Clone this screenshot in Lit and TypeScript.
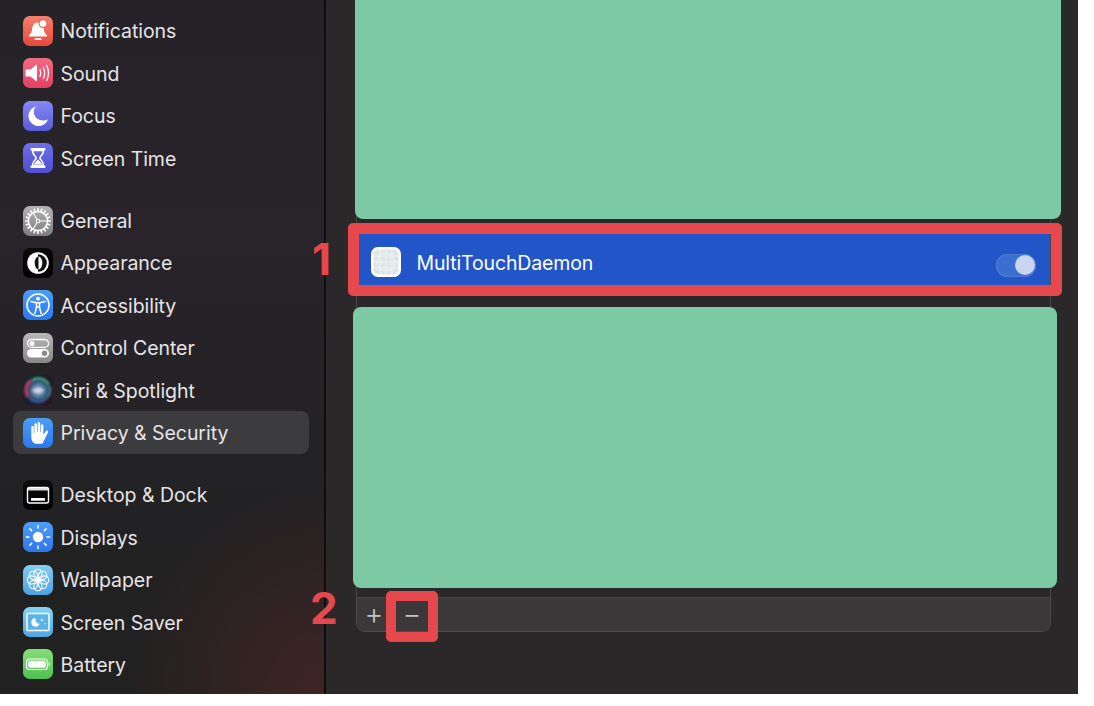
import { LitElement, html, css, svg } from "lit";
import { customElement } from "lit/decorators.js";

const tile = (id: string, from: string, to: string, body: unknown) => html`<svg class="ico" viewBox="0 0 30 30" width="30" height="30">
  <defs><linearGradient id=${id} x1="0" y1="0" x2="0" y2="1"><stop offset="0" stop-color=${from}></stop><stop offset="1" stop-color=${to}></stop></linearGradient></defs>
  <rect x="0" y="0" width="30" height="30" rx="6.8" fill=${`url(#${id})`}></rect>${body}</svg>`;

const rays = (cx: number, cy: number, r1: number, r2: number, n: number, w: number) =>
  Array.from({ length: n }, (_, i) => {
    const a = (i * 2 * Math.PI) / n;
    return svg`<line x1=${cx + r1 * Math.cos(a)} y1=${cy + r1 * Math.sin(a)} x2=${cx + r2 * Math.cos(a)} y2=${cy + r2 * Math.sin(a)} stroke="#fff" stroke-width=${w} stroke-linecap="round"></line>`;
  });

const petals = Array.from({ length: 8 }, (_, i) => {
  const a = (i * Math.PI) / 4;
  return svg`<circle cx=${15 + 6.6 * Math.cos(a)} cy=${15 + 6.6 * Math.sin(a)} r="4.1" fill="none" stroke="#fff" stroke-width="1.1"></circle>`;
});

const groups = [
  [
    ["Notifications", tile("g1", "#f5806f", "#e5493a", svg`
      <path d="M15 6.500c-3.800 0-5.600 3-5.800 6.200-.2 3-1.200 5-3.200 6.600-.5.500-.2 1.200.5 1.200h17c.7 0 1-.7.5-1.200-2-1.600-3-3.600-3.200-6.600C20.600 9.500 18.800 6.500 15 6.500z" fill="#fff"></path>
      <rect x="11.500" y="22.300" width="7" height="1.800" rx=".9" fill="#fff"></rect>
      <circle cx="20" cy="7.500" r="4.600" fill="#ee6a5a"></circle><circle cx="20" cy="7.500" r="3.300" fill="#fff"></circle>`)],
    ["Sound", tile("g2", "#f26a84", "#e53f60", svg`
      <path d="M3.500 11.500h4l5.500-4.500c.5-.3 1-.1 1 .5v15c0 .6-.5.8-1 .5l-5.500-4.500h-4c-.6 0-1-.4-1-1v-5c0-.6.400-1 1-1z" fill="#fff"></path>
      <path d="M17 11.500c1 2.200 1 4.800 0 7M20.300 9.500c1.700 3.400 1.700 7.600 0 11M23.600 7.500c2.400 4.700 2.400 10.300 0 15" fill="none" stroke="#fff" stroke-width="1.300" stroke-linecap="round"></path>`)],
    ["Focus", tile("g3", "#8488f4", "#5a5cd9", svg`
      <path d="M13.500 5.500C8.800 6.300 5.500 10.400 5.500 15c0 5.500 4.500 10 10 10 4.400 0 8-2.700 9.400-6.500-1.500.8-3.100 1.100-4.700 1.100-5.500 0-9.400-4-9.400-9 0-1.800.9-3.800 2.700-5.100z" fill="#fff"></path>`)],
    ["Screen Time", tile("g4", "#6c6eea", "#4f50d0", svg`
      <rect x="7.500" y="5" width="15" height="2.400" rx="1" fill="#fff"></rect><rect x="7.500" y="22.600" width="15" height="2.400" rx="1" fill="#fff"></rect>
      <path d="M9.500 7.500h11c0 4.500-3.700 5.700-3.700 7.500s3.700 3 3.700 7.500h-11c0-4.500 3.700-5.700 3.700-7.500s-3.700-3-3.700-7.500z" fill="none" stroke="#fff" stroke-width="1.600"></path>
      <path d="M11 21.500c.5-2.500 3-3.500 4-5 1 1.500 3.500 2.500 4 5z" fill="#fff"></path>`)],
  ],
  [
    ["General", tile("g5", "#b4b4b4", "#7d7d7d", svg`
      ${rays(15, 15, 10.2, 12.2, 20, 1.7)}
      <circle cx="15" cy="15" r="9.600" fill="none" stroke="#fff" stroke-width="1.500"></circle>
      <circle cx="15" cy="15" r="1.700" fill="none" stroke="#fff" stroke-width="1.100"></circle>
      <path d="M16.700 15h8M14.100 13.500 10 6.700M14.100 16.500 10 23.300" stroke="#fff" stroke-width="1.100" fill="none"></path>`)],
    ["Appearance", tile("g6", "#0a0a0a", "#000000", svg`
      <circle cx="15" cy="15" r="10.800" fill="#fff"></circle>
      <path d="M15 6.200a8.800 8.800 0 0 1 0 17.600z" fill="#111"></path>
      <ellipse cx="15.500" cy="15" rx="3.800" ry="6.400" fill="#fff"></ellipse>
      <path d="M15.500 8.600a3.800 6.400 0 0 0 0 12.800z" fill="#111"></path>`)],
    ["Accessibility", tile("g7", "#4b9ff9", "#2a78ec", svg`
      <circle cx="15" cy="15" r="11" fill="none" stroke="#fff" stroke-width="1.500"></circle>
      <circle cx="15" cy="8.700" r="1.900" fill="#fff"></circle>
      <path d="M7.800 11.500 13.300 12.700h3.400L22.200 11.500M13.500 12.800v4.200l-1.600 6.600M16.500 12.800v4.200l1.600 6.600M13.500 17h3" stroke="#fff" stroke-width="1.500" fill="none" stroke-linecap="round" stroke-linejoin="round"></path>`)],
    ["Control Center", tile("g8", "#b8b8b8", "#878787", svg`
      <rect x="4.500" y="6.500" width="21" height="7.800" rx="3.900" fill="none" stroke="#fff" stroke-width="1.300"></rect>
      <circle cx="9" cy="10.400" r="2.500" fill="#fff"></circle>
      <rect x="4" y="16" width="22" height="8.600" rx="4.300" fill="#fff"></rect>
      <circle cx="21.500" cy="20.300" r="2.700" fill="#8a8a8a"></circle>`)],
    ["Siri & Spotlight", html`<svg class="ico" viewBox="0 0 30 30" width="30" height="30">
      <defs>
        <radialGradient id="s1" cx=".52" cy=".52" r=".5"><stop offset="0" stop-color="#b8d0e4"></stop><stop offset=".35" stop-color="#6d8cb4"></stop><stop offset=".75" stop-color="#2f5b78"></stop><stop offset="1" stop-color="#2d3f58"></stop></radialGradient>
        <linearGradient id="s0" x1="0" y1="0" x2="1" y2="1"><stop offset="0" stop-color="#122a2c"></stop><stop offset=".5" stop-color="#1c1c26"></stop><stop offset="1" stop-color="#2a1420"></stop></linearGradient>
        <filter id="sb" x="-20%" y="-20%" width="140%" height="140%"><feGaussianBlur stdDeviation="1"></feGaussianBlur></filter>
      </defs>
      <rect width="30" height="30" rx="6.800" fill="url(#s0)"></rect>
      <circle cx="15" cy="15" r="12" fill="url(#s1)"></circle>
      <g filter="url(#sb)">
        <path d="M9 5A12 12 0 0 1 26 10" fill="none" stroke="#4fb08e" stroke-width="2.600" opacity=".85"></path>
        <path d="M8 5.500A12 12 0 0 0 5 22" fill="none" stroke="#c83a6c" stroke-width="3.400" opacity=".9"></path>
        <path d="M6 23A12 12 0 0 0 24 23" fill="none" stroke="#3a5fa8" stroke-width="2.600" opacity=".85"></path>
        <path d="M26.500 11A12 12 0 0 1 24.500 22.500" fill="none" stroke="#3f8a92" stroke-width="2.600" opacity=".85"></path>
        <ellipse cx="15" cy="15.500" rx="6" ry="2.800" fill="#e2d6e6" opacity=".7"></ellipse>
      </g></svg>`],
    ["Privacy & Security", tile("g9", "#4b9ff9", "#2a78ec", svg`
      <g transform="matrix(-1 0 0 1 30 0)"><path d="M10.500 24.500c-1.500-1.500-2.300-3.200-3-5L5 14.500c-.5-1 .1-1.800.9-1.900.7-.1 1.300.3 1.700 1.100l2 3V7.700c0-.9.600-1.500 1.300-1.500s1.300.6 1.300 1.500v6.300h.6V5.600c0-.9.600-1.500 1.300-1.500s1.300.6 1.300 1.500V14h.6V6.800c0-.9.600-1.500 1.300-1.500s1.300.6 1.300 1.500V15h.6V9.500c0-.9.600-1.400 1.200-1.400s1.300.5 1.300 1.400v8.500c0 2.800-.5 5-2 6.500-.8.8-2 1.300-3.700 1.300h-3.200c-1.500 0-2.600-.4-3.900-1.300z" fill="#fff"></path></g>`)],
  ],
  [
    ["Desktop & Dock", tile("g10", "#0c0c0c", "#000000", svg`
      <rect x="4.500" y="7.500" width="21" height="15.500" rx="2" fill="none" stroke="#fff" stroke-width="1.400"></rect>
      <rect x="4.500" y="7.500" width="21" height="3" rx="1" fill="#fff" opacity=".85"></rect>
      <rect x="8" y="18" width="14" height="2.800" rx=".6" fill="#fff"></rect>`)],
    ["Displays", tile("g11", "#4b9ff9", "#2f76ea", svg`
      <circle cx="15" cy="15" r="5.200" fill="#fff"></circle>${rays(15, 15, 9, 11.6, 8, 1.5)}`)],
    ["Wallpaper", tile("g12", "#84cdf6", "#4aa3e2", svg`
      ${petals}<circle cx="15" cy="15" r="2.200" fill="#fff"></circle>`)],
    ["Screen Saver", tile("g13", "#84d2f5", "#4fa6e0", svg`
      <rect x="4" y="6.500" width="22" height="17" rx="1" fill="#5ab2e6" stroke="#fff" stroke-width="1.400"></rect>
      <path d="M12.500 11a4.300 4.300 0 1 0 4.200 5.800 4.600 4.600 0 0 1-4.200-5.800z" fill="#fff"></path>
      <path d="M19 11l.5 1.500L21 13l-1.500.5L19 15l-.5-1.500L17 13l1.500-.5zM22 15.500l.3 1 1 .3-1 .3-.3 1-.3-1-1-.3 1-.3z" fill="#fff"></path>`)],
    ["Battery", tile("g14", "#86de78", "#4fc04f", svg`
      <rect x="3.500" y="10" width="21" height="10.500" rx="3" fill="none" stroke="#fff" stroke-width="1.200"></rect>
      <rect x="5.300" y="11.800" width="17.400" height="6.900" rx="1.600" fill="#fff"></rect>
      <path d="M25.800 13.300c1 .3 1.400 1.100 1.400 2s-.4 1.700-1.400 2z" fill="#fff"></path>`)],
  ],
] as [string, unknown][][];

@customElement("app-root")
export class AppRoot extends LitElement {
  static styles = css`
    :host { display: block; width: 1094px; height: 706px; background: #fff; font-family: Inter, "Liberation Sans", sans-serif; overflow: hidden; }
    .window { position: relative; display: flex; width: 1078px; height: 694px; overflow: hidden; background: #2a2829; }
    .sidebar {
      flex: none; width: 326px; box-sizing: border-box; padding: 9.800px 15px 0 13px; display: flex; flex-direction: column; gap: 20px;
      border-right: 2px solid #0e0e0e;
      background:
        radial-gradient(ellipse 200px 210px at 100% 100%, #3f2524 0%, rgba(63,37,36,0) 100%),
        linear-gradient(180deg, #252228 0%, #28242a 35%, #232224 65%, #212121 100%);
    }
    .group { display: flex; flex-direction: column; }
    .item { display: flex; align-items: center; gap: 7.500px; height: 42.400px; padding-left: 10px; border-radius: 8px; color: #e6e4e6; font-size: 19.500px; letter-spacing: -0.04px; width: 296px; box-sizing: border-box; }
    .item span { padding-top: 1px; }
    .item.sel { background: #3c3b3d; }
    .ico { flex: none; display: block; }
    .main { flex: 1; min-width: 0; padding: 0 27px 62px 30px; display: flex; flex-direction: column; }
    .panel { flex: 1; display: flex; flex-direction: column; border: 1px solid #4a4849; border-top: none; border-radius: 0 0 9px 9px; overflow: hidden; }
    .top-space { flex: none; height: 234px; }
    .row { flex: none; height: 51px; box-sizing: border-box; padding: 6px 14px 0 14px; background: #2155c8; display: flex; align-items: center; color: #fff; font-size: 19.500px; letter-spacing: -0.14px; gap: 15.500px; }
    .row span { flex: 1; }
    .app { flex: none; display: block; margin-top: -1px; }
    .toggle { flex: none; position: relative; width: 40px; height: 23px; margin-top: 5px; border-radius: 12px; background: #3a6fd0; box-shadow: inset 0 0 0 1px #4e7cd4; }
    .knob { position: absolute; right: 1px; top: 1.500px; width: 20px; height: 20px; border-radius: 50%; background: #c9d6f2; }
    .space { flex: 1; }
    .foot { flex: none; height: 34px; padding-bottom: 2px; box-sizing: border-box; background: #3a3839; border-top: 1px solid #454344; display: flex; align-items: center; color: #c4c3c4; font-size: 29px; font-weight: 300; line-height: 1; }
    .foot span { width: 38px; text-align: center; margin-left: -2px; margin-right: 2px; }
    .green { position: absolute; background: #7cc9a3; }
    .g1 { left: 355px; top: 0; width: 706px; height: 219px; border-radius: 0 0 8px 8px; }
    .g2 { left: 353px; top: 307px; width: 704px; height: 281px; border-radius: 8px; }
    .mark { position: absolute; box-sizing: border-box; border-style: solid; border-color: #e5484d; border-radius: 5px; }
    .m1 { left: 348px; top: 223px; width: 714px; height: 73px; border-width: 11px; }
    .m2 { left: 386px; top: 591px; width: 52px; height: 51px; border-width: 10px; }
    .num { position: absolute; color: #e5484d; font-weight: 700; font-size: 44px; line-height: 44px; }
    .n1 { left: 312px; top: 237px; }
    .n2 { left: 310px; top: 586px; }
  `;

  render() {
    return html`<div class="window">
      <aside class="sidebar">
        ${groups.map((g) => html`<div class="group">
          ${g.map(([name, icon]) => html`<div class="item ${name === "Privacy & Security" ? "sel" : ""}">${icon}<span>${name}</span></div>`)}
        </div>`)}
      </aside>
      <main class="main">
        <div class="panel">
          <div class="top-space"></div>
          <div class="row">
            <svg class="app" viewBox="0 0 30 30" width="30" height="30">
              <rect x="0" y="0" width="30" height="30" rx="7" fill="#fff"></rect>
              <rect x="2.500" y="2.500" width="25" height="25" rx="5" fill="#dfe5e6"></rect>
              <path d="M9 3v24M15 3v24M21 3v24M3 9h24M3 15h24M3 21h24" stroke="#f1f4f4" stroke-width=".9" fill="none"></path>
              <circle cx="15" cy="15" r="9" fill="none" stroke="#f1f4f4" stroke-width=".9"></circle>
            </svg>
            <span>MultiTouchDaemon</span>
            <div class="toggle"><div class="knob"></div></div>
          </div>
          <div class="space"></div>
          <div class="foot"><span>+</span><span>−</span></div>
        </div>
      </main>
      <div class="green g1"></div>
      <div class="green g2"></div>
      <div class="mark m1"></div>
      <div class="mark m2"></div>
      <div class="num n1">1</div>
      <div class="num n2">2</div>
    </div>`;
  }
}
